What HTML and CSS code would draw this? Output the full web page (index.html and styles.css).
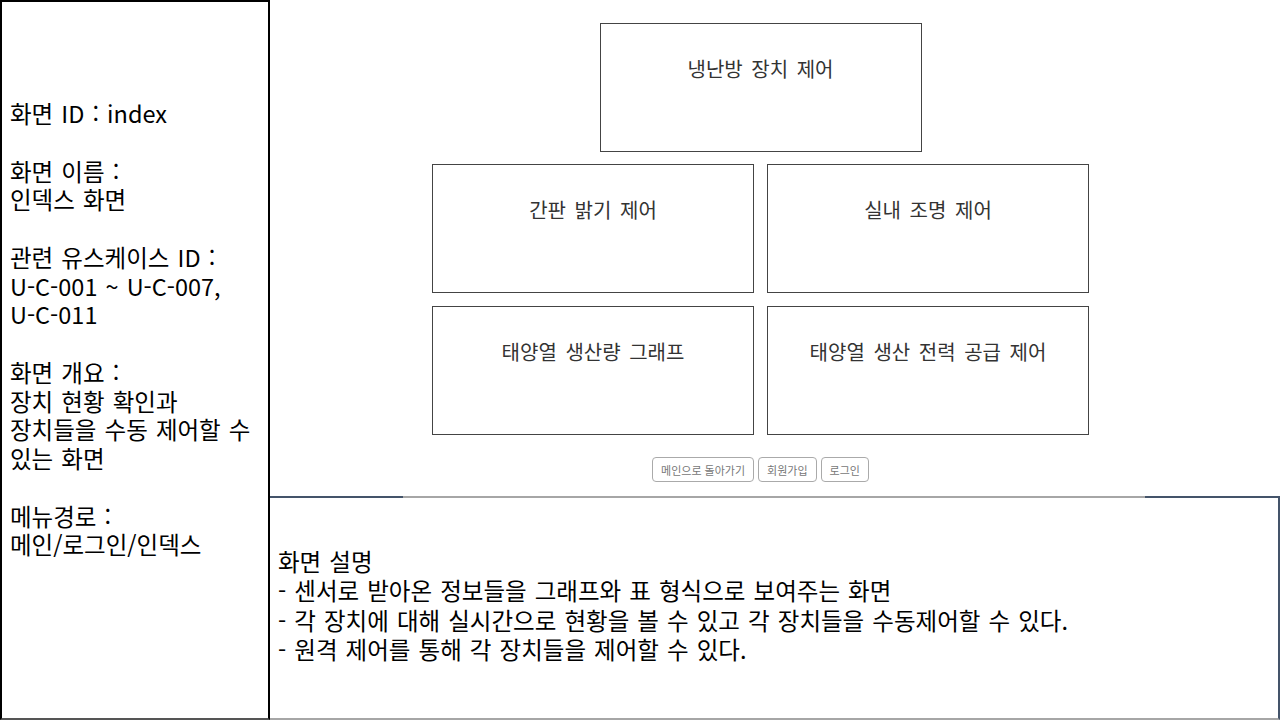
FILE: index.html
```html
<!DOCTYPE html>
<html lang="ko">
<head>
    <meta charset="UTF-8">
    <meta name="viewport" content="width=device-width, initial-scale=1.0">
    <title>인덱스 화면</title>
    <link rel="stylesheet" href="styles.css">
</head>
<body>
    <div class="화면">
        <!-- 화면 정보 -->
        <div class="정보">
            <p>화면 ID : index</p>
            <p>화면 이름 :<br>인덱스 화면</p>
            <p>관련 유스케이스 ID :<br>U-C-001 ~ U-C-007,<br>U-C-011</p>
            <p>화면 개요 :<br>장치 현황 확인과<br>장치들을 수동 제어할 수<br>있는 화면</p>
            <p>메뉴경로 :<br>메인/로그인/인덱스</p>
        </div>

        <div class="오른쪽">
            <!-- 제어 메뉴 -->
            <div class="메뉴">
                <div class="박스">냉난방 장치 제어</div>
                <div class="박스목록">
                    <div class="박스">간판 밝기 제어</div>
                    <div class="박스">실내 조명 제어</div>
                    <div class="박스">태양열 생산량 그래프</div>
                    <div class="박스">태양열 생산 전력 공급 제어</div>
                </div>
                <div class="버튼들">
                    <button>메인으로 돌아가기</button>
                    <button>회원가입</button>
                    <button>로그인</button>
                </div>
            </div>

            <!-- 화면 설명 -->
            <div class="설명">
                화면 설명<br>
                - 센서로 받아온 정보들을 그래프와 표 형식으로 보여주는 화면<br>
                - 각 장치에 대해 실시간으로 현황을 볼 수 있고 각 장치들을 수동제어할 수 있다.<br>
                - 원격 제어를 통해 각 장치들을 제어할 수 있다.
            </div>
        </div>
    </div>
</body>
</html>
```

FILE: styles.css
```css
body {
    margin: 0;
    padding: 0;
    background-color: white;
    font-family: "Noto Sans CJK KR", "Noto Sans", sans-serif;
    color: black;
}

.화면 {
    display: flex;
    width: 1280px;
    height: 720px;
    overflow: hidden;
}

.정보 {
    width: 270px;
    height: 720px;
    box-sizing: border-box;
    border: 2px solid black;
    border-bottom-color: #555;
    padding: 97px 0 0 8px;
    font-size: 23.5px;
    line-height: 28.75px;
    word-spacing: 1.5px;
    flex-shrink: 0;
}

.정보 p {
    margin: 0 0 28.75px 0;
}

.오른쪽 {
    flex: 1;
    display: flex;
    flex-direction: column;
}

.메뉴 {
    height: 496px;
    box-sizing: border-box;
    padding: 23px 29px 0 0;
    display: flex;
    flex-direction: column;
    align-items: center;
}

.박스 {
    width: 322px;
    height: 129px;
    box-sizing: border-box;
    border: 1px solid #444;
    padding-top: 31px;
    text-align: center;
    font-size: 20px;
    line-height: 27px;
    word-spacing: 3px;
    color: #333;
}

.박스목록 {
    display: grid;
    grid-template-columns: 322px 322px;
    gap: 13px;
    margin-top: 12px;
}

.버튼들 {
    display: flex;
    gap: 4px;
    margin-top: 22px;
}

.버튼들 button {
    height: 25px;
    padding: 0 8px;
    background-color: white;
    border: 1px solid #aaa;
    border-radius: 4px;
    font-family: "Noto Sans CJK KR", sans-serif;
    font-size: 11px;
    color: #777;
}

/* 위쪽 선은 가운데만 회색 */
.설명 {
    flex: 1;
    box-sizing: border-box;
    border-right: 2px solid #44546a;
    border-bottom: 2px solid #a6a6a6;
    background: linear-gradient(to right, #44546a 133px, #a6a6a6 133px, #a6a6a6 875px, #44546a 875px) no-repeat top left / 100% 2px;
    padding: 51px 0 0 8px;
    font-size: 23.5px;
    line-height: 29.3px;
    word-spacing: 1.5px;
}
```
